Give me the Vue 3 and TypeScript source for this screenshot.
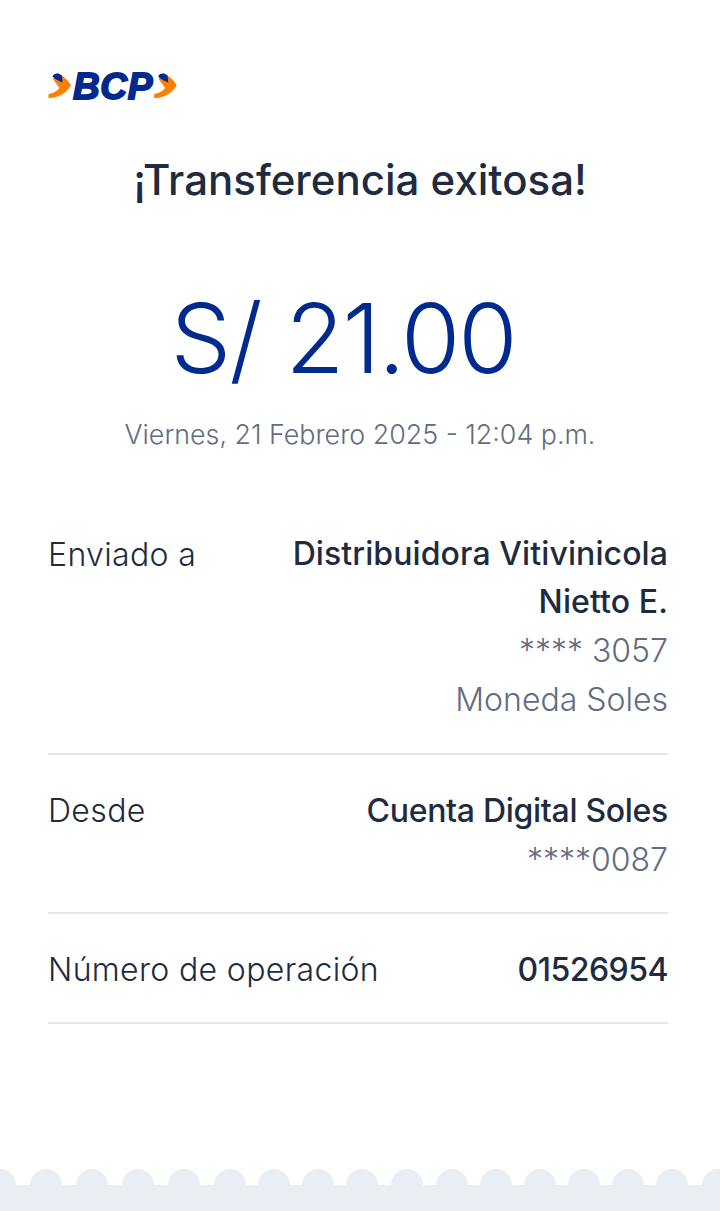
<script setup lang="ts">
const bumps = [0, 46, 92, 138, 184, 230, 274, 318, 362, 407, 452, 496, 540, 584, 628, 672, 718]
</script>

<template>
  <main class="receipt">
    <header class="brand">
      <svg class="logo" width="130" height="48" viewBox="0 -8 130 48" aria-label="BCP">
        <g>
          <path d="M9 3.5C15 5 21 11 23 15.5 19 22.5 10 28.5 0.5 28V24C5 23.5 9 21 11.5 18 9.5 15 7 12 5 9Z" fill="#ff7f00" />
          <path d="M4.5 6.5C5 4 8 3 10.5 3.5L14 5.5 14.5 12.5C11 11 7 9.5 4.5 6.5Z" fill="#002a8d" />
        </g>
        <text x="25" y="29" class="logo-text">BCP</text>
        <g transform="translate(105.7 0)">
          <path d="M9 3.5C15 5 21 11 23 15.5 19 22.5 10 28.5 0.5 28V24C5 23.5 9 21 11.5 18 9.5 15 7 12 5 9Z" fill="#ff7f00" />
          <path d="M4.5 6.5C5 4 8 3 10.5 3.5L14 5.5 14.5 12.5C11 11 7 9.5 4.5 6.5Z" fill="#002a8d" />
        </g>
      </svg>
    </header>

    <h1 class="title">¡Transferencia exitosa!</h1>
    <p class="amount">S/ 21.00</p>
    <p class="date">Viernes, 21 Febrero 2025 - 12:04 p.m.</p>

    <section class="details">
      <div class="row row-sent">
        <span class="label">Enviado a</span>
        <div class="value">
          <strong class="name">Distribuidora Vitivinicola<br />Nietto E.</strong>
          <span>**** 3057</span>
          <span>Moneda Soles</span>
        </div>
      </div>
      <div class="row row-from">
        <span class="label">Desde</span>
        <div class="value">
          <strong class="account">Cuenta Digital Soles</strong>
          <span>****0087</span>
        </div>
      </div>
      <div class="row row-op">
        <span class="label">Número de operación</span>
        <div class="value">
          <strong class="num">01526954</strong>
        </div>
      </div>
    </section>

    <footer class="edge">
      <i v-for="x in bumps" :key="x" class="bump" :style="{ left: x - 16 + 'px' }"></i>
    </footer>
  </main>
</template>

<style scoped>
.receipt {
  width: 720px;
  height: 1211px;
  display: flex;
  flex-direction: column;
  background: #fff;
  color: #1e2b40;
  font-family: Inter, "Open Sans", sans-serif;
  overflow: hidden;
}

.brand {
  padding: 62px 48px 0;
  height: 110px;
  box-sizing: border-box;
}

.logo {
  display: block;
}

.logo-text {
  font-family: "Liberation Sans", sans-serif;
  font-style: italic;
  font-weight: 700;
  font-size: 37px;
  letter-spacing: 0.6px;
  fill: #002a8d;
  stroke: #002a8d;
  stroke-width: 1.8px;
}

.title {
  margin: 44px 0 0;
  height: 52px;
  font-size: 42px;
  line-height: 52px;
  font-weight: 500;
  text-align: center;
}

.amount {
  margin: 77px 0 0;
  padding-right: 34px;
  height: 110px;
  font-size: 96px;
  line-height: 110px;
  font-weight: 300;
  letter-spacing: -2px;
  text-align: center;
  color: #002a8d;
}

.date {
  margin: 21px 0 0;
  height: 40px;
  line-height: 40px;
  font-size: 26.8px;
  font-weight: 300;
  text-align: center;
  color: #616d80;
}

.details {
  margin: 76px 52px 0 48px;
}

.row {
  display: flex;
  justify-content: space-between;
  box-sizing: border-box;
  border-bottom: 2px solid #e4e7eb;
  font-size: 32px;
  line-height: 49px;
}

.row-sent {
  height: 225px;
}

.row-from {
  height: 159px;
  padding-top: 31px;
}

.row-op {
  height: 110px;
  padding-top: 31px;
}

.label {
  font-weight: 300;
  letter-spacing: 0.35px;
  color: #1e2b40;
}

.value {
  display: flex;
  flex-direction: column;
  align-items: flex-end;
  text-align: right;
  font-weight: 300;
  color: #616d80;
}

.value strong {
  font-weight: 500;
  letter-spacing: 0.1px;
  color: #1e2b40;
}

.value .name {
  line-height: 48px;
}

.value .account {
  letter-spacing: -0.3px;
}

.value .num {
  letter-spacing: -0.5px;
}

.edge {
  position: relative;
  margin-top: auto;
  height: 26px;
  background: #e9eef5;
}

.bump {
  position: absolute;
  top: -16px;
  width: 32px;
  height: 32px;
  border-radius: 50%;
  background: #e9eef5;
}
</style>

<style>
html, body {
  margin: 0;
  background: #fff;
}
</style>
